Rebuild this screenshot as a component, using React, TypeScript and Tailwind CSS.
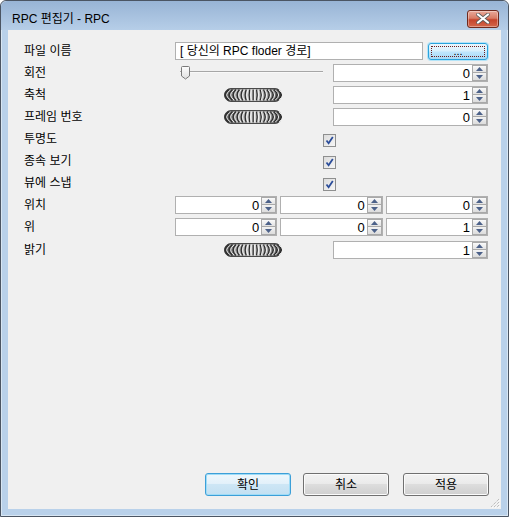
import React from 'react'

const font = "font-['Liberation_Sans','Noto_Sans_CJK_KR',sans-serif]"

function Spin() {
  return (
    <div className="flex flex-col w-[15px] h-[16px] shrink-0">
      <div className="h-[8px] border border-[#a9a9a9] bg-gradient-to-b from-[#fafafa] to-[#e2e2e2] flex items-center justify-center">
        <svg width="7" height="4" viewBox="0 0 7 4">
          <polygon points="0,4 7,4 3.5,0" fill="#4c6189" />
        </svg>
      </div>
      <div className="h-[8px] border border-t-0 border-[#a9a9a9] bg-gradient-to-b from-[#f3f3f3] to-[#dcdcdc] flex items-center justify-center">
        <svg width="7" height="4" viewBox="0 0 7 4">
          <polygon points="0,0 7,0 3.5,4" fill="#4c6189" />
        </svg>
      </div>
    </div>
  )
}

function NumBox({ value, w = 'w-[155px]' }: { value: string; w?: string }) {
  return (
    <div className={`${w} h-[18px] border border-[#b0b0b0] bg-white flex items-center`}>
      <span className="flex-1 text-right pr-[2px] text-[13px] leading-none">{value}</span>
      <Spin />
    </div>
  )
}

function Knob() {
  const ridges = Array.from({ length: 15 }).map((_, i) => {
    const x = 5 + i * 3.45
    const c = (29 - x) * 0.16
    return (
      <g key={i}>
        <path d={`M${x},1.5 Q${x - c * 2},7 ${x},12.5`} stroke="#2e2e2e" strokeWidth="1.3" fill="none" />
        <path d={`M${x + 1.5},2 Q${x + 1.5 - c * 2},7 ${x + 1.5},12`} stroke="#f7f7f7" strokeWidth="0.9" fill="none" />
      </g>
    )
  })
  return (
    <svg width="58" height="14" viewBox="0 0 58 14">
      <defs>
        <linearGradient id="kh" x1="0" y1="0" x2="1" y2="0">
          <stop offset="0" stopColor="#3a3a3a" />
          <stop offset="0.2" stopColor="#9a9a9a" />
          <stop offset="0.5" stopColor="#d6d6d6" />
          <stop offset="0.8" stopColor="#9a9a9a" />
          <stop offset="1" stopColor="#3a3a3a" />
        </linearGradient>
      </defs>
      <rect x="0.5" y="0.5" width="57" height="13" rx="6.5" fill="url(#kh)" stroke="#4a4a4a" />
      {ridges}
    </svg>
  )
}

function Slider() {
  return (
    <div className="relative ml-[5px] w-[143px] h-[18px]">
      <div className="absolute left-0 right-0 top-[7px] h-[2px] border-t border-[#a6a6a6] border-b border-b-[#f8f8f8] bg-[#dcdcdc]" />
      <svg className="absolute left-[1px] top-[2px]" width="9" height="14" viewBox="0 0 9 14">
        <defs>
          <linearGradient id="th" x1="0" y1="0" x2="0" y2="1">
            <stop offset="0" stopColor="#fdfdfd" />
            <stop offset="1" stopColor="#dedede" />
          </linearGradient>
        </defs>
        <path d="M1.5,0.5 H7.5 Q8.5,0.5 8.5,1.5 V10 L4.5,13 L0.5,10 V1.5 Q0.5,0.5 1.5,0.5 Z" fill="url(#th)" stroke="#7a7a7a" />
      </svg>
    </div>
  )
}

function Check() {
  return (
    <div className="w-[13px] h-[13px] border border-[#8e8f8f] bg-gradient-to-br from-[#dcdcdc] to-[#f6f6f6] flex items-center justify-center">
      <svg width="9" height="9" viewBox="0 0 9 9">
        <path d="M1.5,4.5 L3.6,7.2 L7.8,1" stroke="#2b4d9a" strokeWidth="1.8" fill="none" />
      </svg>
    </div>
  )
}

function Btn({ label, primary, className = '' }: { label: string; primary?: boolean; className?: string }) {
  return (
    <div
      className={`w-[86px] h-[23px] rounded-[3px] border flex items-center justify-center text-[12px] ${className} ${
        primary
          ? 'border-[#3c9fd8] shadow-[inset_0_0_0_1px_#9fdcf7] bg-[linear-gradient(#eef7fc_0%,#e3f1fa_45%,#cde6f5_50%,#c3e0f2_100%)]'
          : 'border-[#707070] shadow-[inset_0_0_0_1px_#fbfbfb] bg-[linear-gradient(#f2f2f2_0%,#ebebeb_45%,#dddddd_50%,#cfcfcf_100%)]'
      }`}
    >
      {label}
    </div>
  )
}

function Row({ label, children, className = '' }: { label: string; children?: React.ReactNode; className?: string }) {
  return (
    <div className={`flex h-[18px] items-center ${className}`}>
      <div className="w-[151px] shrink-0 text-[12px] leading-none">{label}</div>
      <div className="flex-1 flex items-center">{children}</div>
    </div>
  )
}

export default function App() {
  return (
    <div className={`w-[509px] h-[517px] bg-white ${font} text-black`}>
      <div className="w-[509px] h-[517px] rounded-t-[6px] border border-[#4b5563] bg-[#b9d1ea] flex flex-col shadow-[inset_0_0_0_1px_rgba(255,255,255,0.45)]">
        {/* title bar */}
        <div className="h-[29px] shrink-0 flex items-center justify-between pl-[11px] pr-[9px] pt-[6px] rounded-t-[6px] bg-[linear-gradient(#98b4d5,#b6cee8)]">
          <span className="text-[12px] leading-none">RPC 편집기 - RPC</span>
          <div className="w-[32px] h-[18px] rounded-[3px] border border-[#6f2a1e] bg-[linear-gradient(#e9a99a_0%,#d97c65_45%,#c5432b_55%,#d3664b_100%)] flex items-center justify-center shadow-[inset_0_0_0_1px_rgba(255,255,255,0.35)]">
            <svg width="14" height="11" viewBox="0 0 14 11">
              <path d="M2,1.5 L12,9.5 M12,1.5 L2,9.5" stroke="#5a5a5a" strokeWidth="3.6" strokeLinecap="round" />
              <path d="M2,1.5 L12,9.5 M12,1.5 L2,9.5" stroke="#ffffff" strokeWidth="2.2" strokeLinecap="round" />
            </svg>
          </div>
        </div>

        {/* client */}
        <div className="relative flex-1 mx-[7px] mb-[7px] bg-[#f0f0f0] flex flex-col pt-[12px] pl-[16px]">
          <div className="flex flex-col gap-[4px] pr-[13px]">
            <Row label="파일 이름">
              <div className="w-[248px] h-[18px] border border-[#b0b0b0] bg-white flex items-center pl-[4px] text-[12px] leading-none">
                [ 당신의 RPC floder 경로]
              </div>
              <div className="ml-[5px] w-[60px] h-[17px] rounded-[3px] border border-[#2aa3dd] bg-[linear-gradient(#eaf6fd_0%,#d9f0fc_45%,#bee6fd_55%,#a7d9f5_100%)] p-[2px] shadow-[0_0_0_1px_#b4e4f8]">
                <div className="w-full h-full border border-dotted border-[#6b1f1f] flex items-end justify-center text-[11px] leading-[9px]">
                  ...
                </div>
              </div>
            </Row>
            <Row label="회전">
              <div className="w-[158px]">
                <Slider />
              </div>
              <NumBox value="0" />
            </Row>
            <Row label="축척">
              <div className="w-[158px] pl-[49px] flex">
                <Knob />
              </div>
              <NumBox value="1" />
            </Row>
            <Row label="프레임 번호">
              <div className="w-[158px] pl-[49px] flex">
                <Knob />
              </div>
              <NumBox value="0" />
            </Row>
            <Row label="투명도">
              <div className="pl-[148px] pt-[3px]">
                <Check />
              </div>
            </Row>
            <Row label="종속 보기">
              <div className="pl-[148px] pt-[3px]">
                <Check />
              </div>
            </Row>
            <Row label="뷰에 스냅">
              <div className="pl-[148px] pt-[3px]">
                <Check />
              </div>
            </Row>
            <Row label="위치">
              <div className="grid grid-cols-3 gap-[3px] w-[313px]">
                <NumBox value="0" w="w-full" />
                <NumBox value="0" w="w-full" />
                <NumBox value="0" w="w-full" />
              </div>
            </Row>
            <Row label="위">
              <div className="grid grid-cols-3 gap-[3px] w-[313px]">
                <NumBox value="0" w="w-full" />
                <NumBox value="0" w="w-full" />
                <NumBox value="1" w="w-full" />
              </div>
            </Row>
            <Row label="밝기" className="mt-[1px]">
              <div className="w-[158px] pl-[49px] flex">
                <Knob />
              </div>
              <NumBox value="1" />
            </Row>
          </div>

          <div className="mt-auto flex justify-end pr-[12px] pb-[13px]">
            <Btn label="확인" primary />
            <Btn label="취소" className="ml-[12px]" />
            <Btn label="적용" className="ml-[14px]" />
          </div>

          {/* resize grip */}
          <svg className="absolute right-[1px] bottom-[1px]" width="11" height="11" viewBox="0 0 11 11">
            <path d="M10,2 L2,10 M10,5 L5,10 M10,8 L8,10" stroke="#a8a8a8" strokeWidth="1" strokeDasharray="1 1" />
            <path d="M11,3 L3,11 M11,6 L6,11 M11,9 L9,11" stroke="#ffffff" strokeWidth="1" strokeDasharray="1 1" />
          </svg>
        </div>
      </div>
    </div>
  )
}
